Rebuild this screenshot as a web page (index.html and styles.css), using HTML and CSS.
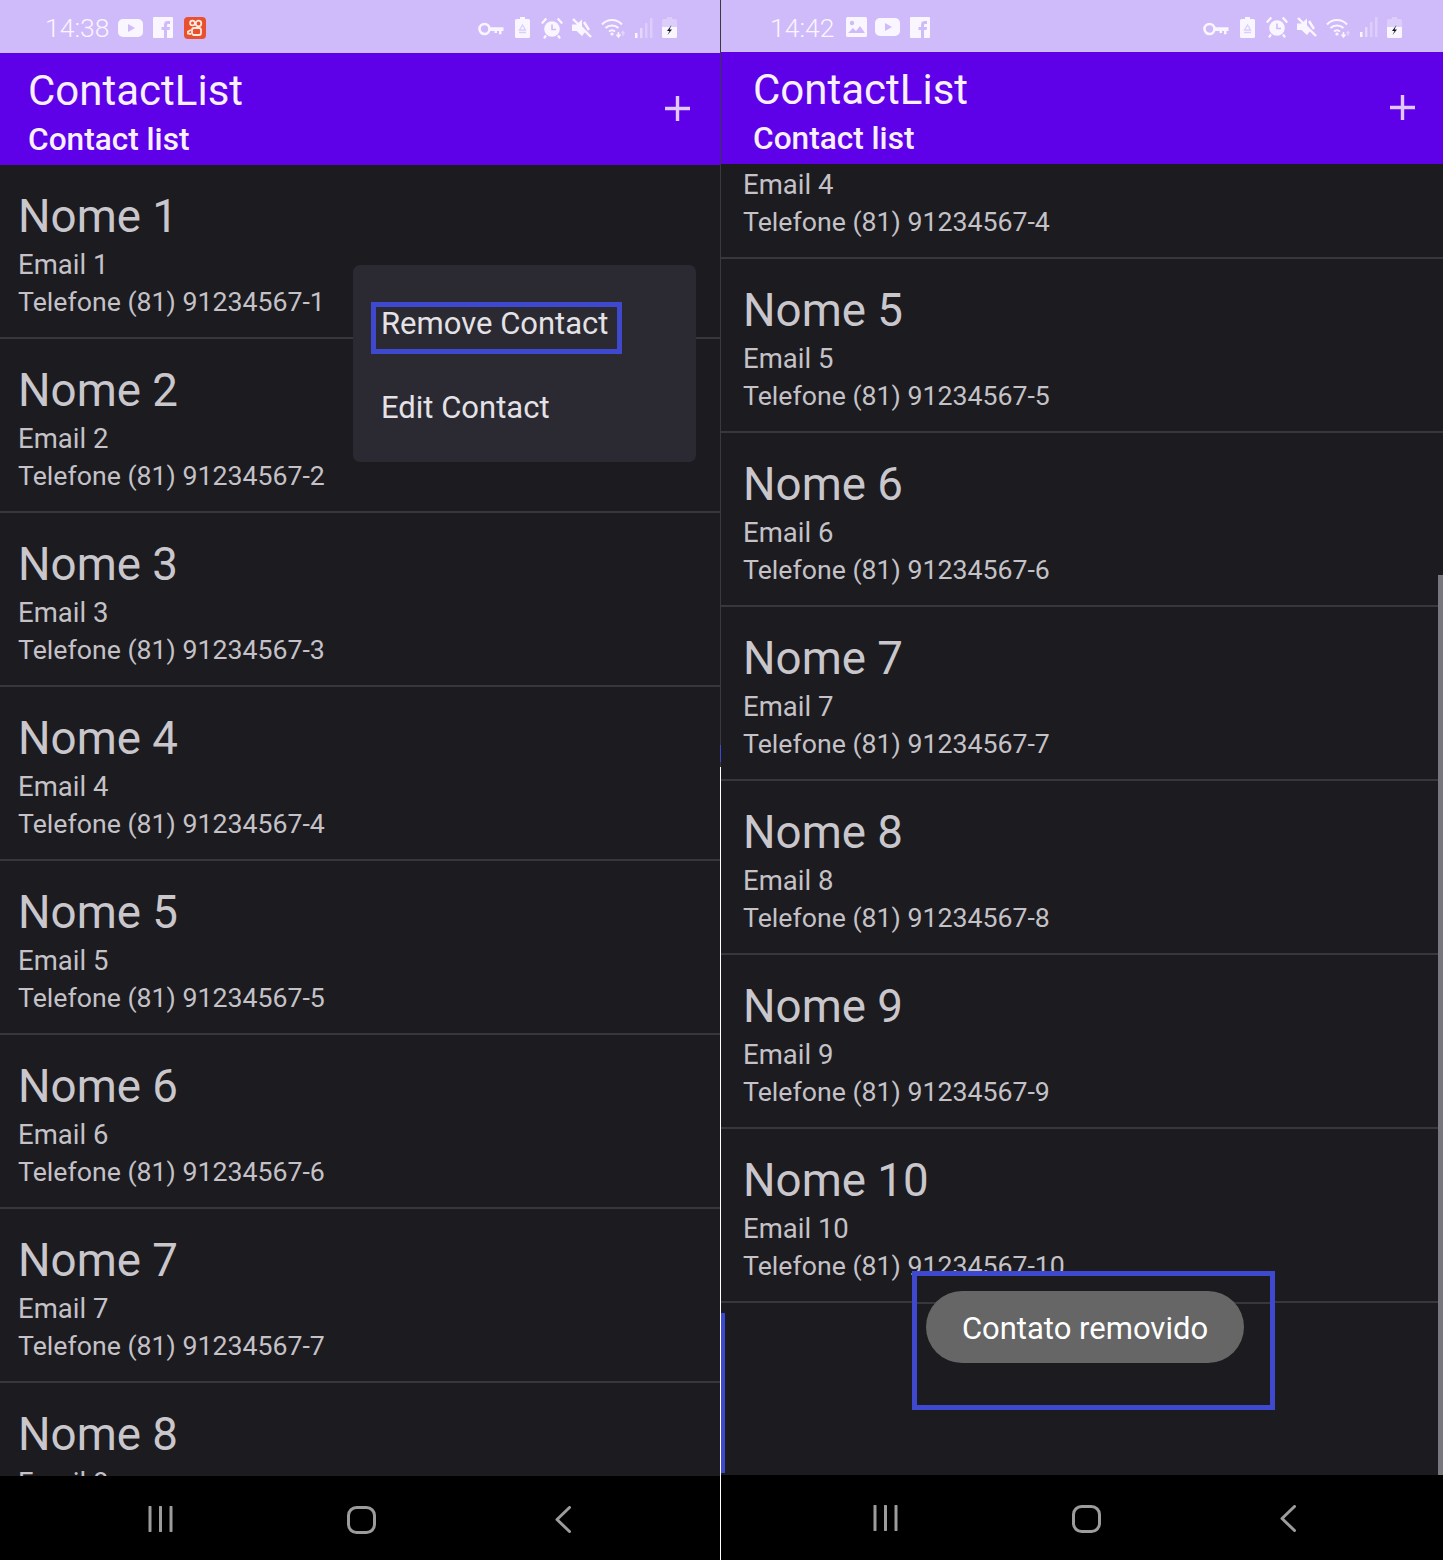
FILE: index.html
```html
<!DOCTYPE html>
<html lang="en">
<head>
    <meta charset="UTF-8">
    <meta name="viewport" content="width=device-width, initial-scale=1.0">
    <title>ContactList</title>
    <link rel="stylesheet" href="styles.css">
</head>
<body>
    <svg class="icon-defs" width="0" height="0">
        <defs>
            <symbol id="i-youtube" viewBox="0 0 25 18">
                <rect width="25" height="18" rx="5" fill="#faf6ff"/>
                <path d="M10 5l7 4-7 4z" fill="#cfbbfa"/>
            </symbol>
            <symbol id="i-facebook" viewBox="0 0 20 21">
                <rect width="20" height="21" rx="1" fill="#faf6ff"/>
                <path d="M11 21v-8H8.500V10H11V7.500C11 5 12.500 4 14.500 4H17v3h-1.600C14.300 7 14 7.600 14 8.500V10h3l-.5 3H14v8z" fill="#cfbbfa"/>
            </symbol>
            <symbol id="i-kuai" viewBox="0 0 22 22">
                <rect width="22" height="22" rx="4" fill="#e8502e"/>
                <g fill="none" stroke="#ffeadd" stroke-width="1.800">
                    <circle cx="8.500" cy="6" r="2.400"/>
                    <circle cx="14.500" cy="6.500" r="2.800"/>
                    <rect x="8" y="11" width="9" height="7" rx="2"/>
                    <path d="M7 13l-3 1.500v2L7 17"/>
                </g>
            </symbol>
            <symbol id="i-image" viewBox="0 0 21 20">
                <rect width="21" height="20" rx="1.500" fill="#faf6ff"/>
                <circle cx="6" cy="6" r="2.200" fill="#cfbbfa"/>
                <path d="M2 16l5-5 3 3 4-5 5 7z" fill="#cfbbfa"/>
            </symbol>
            <symbol id="i-key" viewBox="0 0 26 16">
                <circle cx="6.500" cy="8" r="5" fill="none" stroke="#faf6ff" stroke-width="2.600"/>
                <path d="M11 6.300h14.500v3.600H23.500v3.400h-2.500V9.900h-2v2.200h-2.500V9.900H11z" fill="#faf6ff"/>
            </symbol>
            <symbol id="i-saver" viewBox="0 0 15 21">
                <path d="M5 0h5v2h3.500A1.500 1.500 0 0 1 15 3.500V19.500A1.500 1.500 0 0 1 13.500 21H1.500A1.500 1.500 0 0 1 0 19.500V3.500A1.500 1.500 0 0 1 1.500 2H5z" fill="#faf6ff"/>
                <path d="M7.500 8l-3 5h6zM4 15.500h7" stroke="#dccdfb" stroke-width="1.300" fill="none"/>
            </symbol>
            <symbol id="i-alarm" viewBox="0 0 22 22">
                <circle cx="11" cy="12" r="7.800" fill="#faf6ff"/>
                <path d="M11 7.500V12.500H15" fill="none" stroke="#cfbbfa" stroke-width="1.600"/>
                <path d="M.8 6.500l4.500-5M21.200 6.500l-4.500-5M5 18.500l-2 2.800M17 18.500l2 2.800" fill="none" stroke="#faf6ff" stroke-width="2.200"/>
            </symbol>
            <symbol id="i-mute" viewBox="0 0 20 20">
                <path d="M0 6.500h4.500L10 1.500v8.500l3.500 3.500L10 18l-5.500-5H0z" fill="#faf6ff"/>
                <path d="M1 1l18 18" fill="none" stroke="#faf6ff" stroke-width="2.400"/>
                <path d="M12 4l5 8" fill="none" stroke="#faf6ff" stroke-width="2.400"/>
            </symbol>
            <symbol id="i-wifi" viewBox="0 0 24 21">
                <g fill="none" stroke="#faf6ff" stroke-width="2">
                    <path d="M1 7.500C6.500 1.500 15.500 1.500 21 7.500"/>
                    <path d="M4.500 11C8 7.500 14 7.500 17.500 11"/>
                    <path d="M8 14.500c1.800-1.500 4.200-1.500 6 0"/>
                </g>
                <circle cx="11" cy="17" r="1.600" fill="#faf6ff"/>
                <path d="M17.500 15v4M15.500 17.500l2 2.500 2-2.500" fill="none" stroke="#faf6ff" stroke-width="1.500"/>
                <path d="M22 19v-4M20.500 16.500l1.500-2 1.500 2" fill="none" stroke="#e4d8fb" stroke-width="1.200"/>
            </symbol>
            <symbol id="i-signal" viewBox="0 0 18 20">
                <rect x="0" y="15" width="2.500" height="5" fill="#faf6ff"/>
                <rect x="5" y="10" width="2.500" height="10" fill="#e4d8fb"/>
                <rect x="10" y="5" width="2.500" height="15" fill="#dccdfb"/>
                <rect x="15" y="0" width="2.500" height="20" fill="#dccdfb"/>
            </symbol>
            <symbol id="i-battery" viewBox="0 0 15 21">
                <path d="M5 0h5v2h3.500A1.500 1.500 0 0 1 15 3.500V10H0V3.500A1.500 1.500 0 0 1 1.500 2H5z" fill="#dccdfb"/>
                <path d="M0 10h15v9.500a1.500 1.500 0 0 1-1.500 1.500H1.500A1.500 1.500 0 0 1 0 19.500z" fill="#faf6ff"/>
                <path d="M9.500 8L5 14h2.500L5.500 18 10 12.500H7.500z" fill="#16121f"/>
            </symbol>
            <symbol id="i-plus" viewBox="0 0 25 25">
                <path d="M12.500 0v25M0 12.500h25" stroke="#e3c8ff" stroke-width="3.400" fill="none"/>
            </symbol>
            <symbol id="i-recents" viewBox="0 0 25 26">
                <path d="M2 1v24M12.500 1v24M23 1v24" stroke="#9c9c9c" stroke-width="3" stroke-linecap="round" fill="none"/>
            </symbol>
            <symbol id="i-home" viewBox="0 0 29 28">
                <rect x="1.500" y="1.500" width="26" height="25" rx="8" fill="none" stroke="#9c9c9c" stroke-width="3"/>
            </symbol>
            <symbol id="i-back" viewBox="0 0 16 27">
                <path d="M14.500 1.500L2 13.500l12.500 12" stroke="#9c9c9c" stroke-width="3" stroke-linecap="round" stroke-linejoin="round" fill="none"/>
            </symbol>
        </defs>
    </svg>

    <div class="screens">
        <section class="phone phone-left">
            <div class="status-bar">
                <span class="clock">14:38</span>
                <div class="status-apps">
                    <svg class="ic-yt"><use href="#i-youtube"/></svg>
                    <svg class="ic-fb"><use href="#i-facebook"/></svg>
                    <svg class="ic-kuai"><use href="#i-kuai"/></svg>
                </div>
                <div class="status-system">
                    <svg class="ic-key"><use href="#i-key"/></svg>
                    <svg class="ic-saver"><use href="#i-saver"/></svg>
                    <svg class="ic-alarm"><use href="#i-alarm"/></svg>
                    <svg class="ic-mute"><use href="#i-mute"/></svg>
                    <svg class="ic-wifi"><use href="#i-wifi"/></svg>
                    <svg class="ic-signal"><use href="#i-signal"/></svg>
                    <svg class="ic-battery"><use href="#i-battery"/></svg>
                </div>
            </div>
            <header class="app-bar">
                <div class="app-titles">
                    <div class="app-name">ContactList</div>
                    <div class="app-subtitle">Contact list</div>
                </div>
                <svg class="ic-plus"><use href="#i-plus"/></svg>
            </header>
            <div class="contact-list">
                <div class="contact-row"><div class="contact-name">Nome 1</div><div class="contact-email">Email 1</div><div class="contact-phone">Telefone (81) 91234567-1</div></div>
                <div class="contact-row"><div class="contact-name">Nome 2</div><div class="contact-email">Email 2</div><div class="contact-phone">Telefone (81) 91234567-2</div></div>
                <div class="contact-row"><div class="contact-name">Nome 3</div><div class="contact-email">Email 3</div><div class="contact-phone">Telefone (81) 91234567-3</div></div>
                <div class="contact-row"><div class="contact-name">Nome 4</div><div class="contact-email">Email 4</div><div class="contact-phone">Telefone (81) 91234567-4</div></div>
                <div class="contact-row"><div class="contact-name">Nome 5</div><div class="contact-email">Email 5</div><div class="contact-phone">Telefone (81) 91234567-5</div></div>
                <div class="contact-row"><div class="contact-name">Nome 6</div><div class="contact-email">Email 6</div><div class="contact-phone">Telefone (81) 91234567-6</div></div>
                <div class="contact-row"><div class="contact-name">Nome 7</div><div class="contact-email">Email 7</div><div class="contact-phone">Telefone (81) 91234567-7</div></div>
                <div class="contact-row"><div class="contact-name">Nome 8</div><div class="contact-email">Email 8</div><div class="contact-phone">Telefone (81) 91234567-8</div></div>
            </div>
            <div class="popup-menu">
                <div class="menu-item menu-item-marked"><span class="mark-box">Remove Contact</span></div>
                <div class="menu-item">Edit Contact</div>
            </div>
            <nav class="nav-bar">
                <svg class="ic-recents"><use href="#i-recents"/></svg>
                <svg class="ic-home"><use href="#i-home"/></svg>
                <svg class="ic-back"><use href="#i-back"/></svg>
            </nav>
        </section>

        <div class="seam"></div>

        <section class="phone phone-right">
            <div class="status-bar">
                <span class="clock">14:42</span>
                <div class="status-apps">
                    <svg class="ic-image"><use href="#i-image"/></svg>
                    <svg class="ic-yt"><use href="#i-youtube"/></svg>
                    <svg class="ic-fb"><use href="#i-facebook"/></svg>
                </div>
                <div class="status-system">
                    <svg class="ic-key"><use href="#i-key"/></svg>
                    <svg class="ic-saver"><use href="#i-saver"/></svg>
                    <svg class="ic-alarm"><use href="#i-alarm"/></svg>
                    <svg class="ic-mute"><use href="#i-mute"/></svg>
                    <svg class="ic-wifi"><use href="#i-wifi"/></svg>
                    <svg class="ic-signal"><use href="#i-signal"/></svg>
                    <svg class="ic-battery"><use href="#i-battery"/></svg>
                </div>
            </div>
            <header class="app-bar">
                <div class="app-titles">
                    <div class="app-name">ContactList</div>
                    <div class="app-subtitle">Contact list</div>
                </div>
                <svg class="ic-plus"><use href="#i-plus"/></svg>
            </header>
            <div class="contact-list">
                <div class="contact-row contact-row-scrolled"><div class="contact-email">Email 4</div><div class="contact-phone">Telefone (81) 91234567-4</div></div>
                <div class="contact-row"><div class="contact-name">Nome 5</div><div class="contact-email">Email 5</div><div class="contact-phone">Telefone (81) 91234567-5</div></div>
                <div class="contact-row"><div class="contact-name">Nome 6</div><div class="contact-email">Email 6</div><div class="contact-phone">Telefone (81) 91234567-6</div></div>
                <div class="contact-row"><div class="contact-name">Nome 7</div><div class="contact-email">Email 7</div><div class="contact-phone">Telefone (81) 91234567-7</div></div>
                <div class="contact-row"><div class="contact-name">Nome 8</div><div class="contact-email">Email 8</div><div class="contact-phone">Telefone (81) 91234567-8</div></div>
                <div class="contact-row"><div class="contact-name">Nome 9</div><div class="contact-email">Email 9</div><div class="contact-phone">Telefone (81) 91234567-9</div></div>
                <div class="contact-row"><div class="contact-name">Nome 10</div><div class="contact-email">Email 10</div><div class="contact-phone">Telefone (81) 91234567-10</div></div>
                <div class="scroll-thumb"></div>
                <div class="side-mark"></div>
            </div>
            <div class="toast-mark">
                <div class="toast">Contato removido</div>
            </div>
            <nav class="nav-bar">
                <svg class="ic-recents"><use href="#i-recents"/></svg>
                <svg class="ic-home"><use href="#i-home"/></svg>
                <svg class="ic-back"><use href="#i-back"/></svg>
            </nav>
        </section>
    </div>
</body>
</html>
```

FILE: styles.css
```css
* {
    margin: 0;
    padding: 0;
    box-sizing: border-box;
}

body {
    font-family: Roboto, "Liberation Sans", sans-serif;
    background: #1c1b20;
    width: 1443px;
    height: 1560px;
    overflow: hidden;
}

.icon-defs {
    position: absolute;
}

svg {
    display: block;
    flex: none;
}

.screens {
    display: flex;
    height: 1560px;
}

.phone {
    --inset: 0px;
    --end: 0px;
    position: relative;
    display: flex;
    flex-direction: column;
    width: 720px;
    background: #1c1b20;
}

.phone-right {
    --inset: 4px;
    --end: -2px;
    width: 722px;
}

/* the line where the two screenshots were joined */
.seam {
    width: 1px;
    background: linear-gradient(#3a393e 745px, #3f49cf 745px, #3f49cf 762px, #3a393e 762px, #3a393e 767px, #fff 767px);
}

/* status bar */
.status-bar {
    display: flex;
    align-items: center;
    height: 53px;
    padding-left: calc(45px + var(--inset));
    padding-right: calc(43px + var(--end));
    padding-top: 2px;
    background: #cfbbfa;
}

.phone-right .status-bar {
    height: 52px;
}

.clock {
    width: 63px;
    font-size: 26.500px;
    font-weight: 300;
    color: #faf5ff;
}

.status-apps {
    display: flex;
    align-items: center;
    gap: 10px;
    margin-left: 10px;
}

.status-system {
    display: flex;
    align-items: center;
    gap: 10px;
    margin-left: auto;
}

.ic-yt { width: 25px; height: 18px; }
.ic-fb { width: 20px; height: 21px; }
.ic-kuai { width: 22px; height: 22px; margin-left: 1px; }
.ic-image { width: 21px; height: 20px; margin-left: 3px; margin-right: -2px; }
.ic-key { width: 26px; height: 16px; margin-top: 3px; }
.ic-saver { width: 15px; height: 21px; margin-left: 1px; }
.ic-alarm { width: 22px; height: 22px; margin-left: 1px; margin-right: -1px; }
.ic-mute { width: 20px; height: 20px; }
.ic-wifi { width: 24px; height: 21px; margin-left: -1px; }
.ic-signal { width: 18px; height: 20px; }
.ic-battery { width: 15px; height: 21px; margin-left: -1px; }

/* app bar */
.app-bar {
    display: flex;
    align-items: center;
    justify-content: space-between;
    height: 112px;
    padding-left: calc(28px + var(--inset));
    padding-right: calc(30px + var(--end));
    background: #5e00e8;
    color: #f8efff;
}

.app-titles {
    align-self: flex-start;
    padding-top: 13px;
}

.app-name {
    font-size: 42px;
    line-height: 50px;
}

.app-subtitle {
    font-size: 31.600px;
    font-weight: 500;
    line-height: 36px;
    margin-top: 6px;
}

.ic-plus {
    width: 25px;
    height: 25px;
    margin-bottom: 2px;
}

/* list */
.contact-list {
    position: relative;
    flex: 1;
    overflow: hidden;
}

.contact-row {
    height: 174px;
    padding: 22px 0 0 calc(18px + var(--inset));
    border-bottom: 2px solid #38373c;
}

.contact-row-scrolled {
    height: 95px;
    padding-top: 2px;
}

.contact-name {
    font-size: 45.700px;
    line-height: 59px;
    color: #c9c7cc;
}

.contact-email {
    font-size: 27.500px;
    line-height: 38px;
    color: #c4c2c7;
}

.contact-phone {
    font-size: 26.700px;
    line-height: 37px;
    color: #c4c2c7;
}

.scroll-thumb {
    position: absolute;
    top: 411px;
    right: 0;
    bottom: 0;
    width: 5px;
    background: #77757d;
}

.side-mark {
    position: absolute;
    left: 0;
    bottom: 2px;
    width: 4px;
    height: 160px;
    background: #3f49cf;
}

/* popup menu, placed over the list */
.popup-menu {
    position: absolute;
    top: 265px;
    left: 353px;
    width: 343px;
    height: 197px;
    padding-top: 37px;
    border-radius: 7px;
    background: #2b2a32;
    color: #e4e2e6;
    font-size: 31px;
}

.menu-item {
    height: 52px;
    padding-left: 28px;
    line-height: 52px;
}

.menu-item-marked {
    margin-bottom: 28px;
    padding-left: 18px;
}

.mark-box {
    display: block;
    width: 251px;
    height: 52px;
    padding-left: 5px;
    border: 5px solid #3f49cf;
    line-height: 34px;
}

/* toast inside its blue marker */
.toast-mark {
    position: absolute;
    top: 1271px;
    left: 191px;
    width: 363px;
    height: 139px;
    padding: 15px 0 0 8px;
    border: 5px solid #3f49cf;
    background: linear-gradient(#1c1b20 26px, #38373c 26px, #38373c 28px, #1c1b20 28px);
}

.toast {
    width: 318px;
    height: 72px;
    margin-left: 1px;
    border-radius: 36px;
    background: #666;
    color: #fff;
    font-size: 31px;
    line-height: 76px;
    text-align: center;
}

/* navigation bar */
.nav-bar {
    position: relative;
    height: 84px;
    background: #000;
}

.phone-right .nav-bar {
    height: 85px;
}

.nav-bar svg {
    position: absolute;
    top: 30px;
}

.ic-recents { left: calc(148px + var(--inset)); width: 25px; height: 26px; }
.ic-home { left: calc(347px + var(--inset)); width: 29px; height: 28px; }
.ic-back { left: calc(555px + var(--inset)); width: 16px; height: 27px; }
```
